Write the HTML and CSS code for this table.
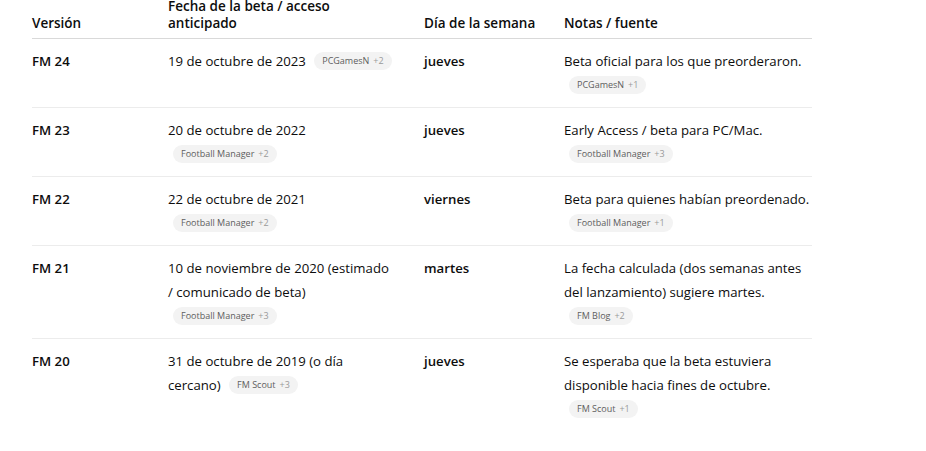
FILE: index.html
```html
<!DOCTYPE html>
<html lang="es">
<head>
<meta charset="utf-8">
<title>Fechas de beta de Football Manager</title>
<link rel="stylesheet" href="styles.css">
</head>
<body>
<div class="wrap">
<table class="table">
  <colgroup>
    <col class="c-ver"><col class="c-date"><col class="c-day"><col class="c-notes">
  </colgroup>
  <thead>
    <tr>
      <th>Versión</th>
      <th class="h-date">Fecha de la beta / acceso anticipado</th>
      <th>Día de la semana</th>
      <th>Notas / fuente</th>
    </tr>
  </thead>
  <tbody>
    <tr>
      <td class="ver">FM 24</td>
      <td class="cell date"><span class="txt">19 de octubre de 2023</span> <span class="pill">PCGamesN<span class="more">+2</span></span></td>
      <td class="day">jueves</td>
      <td class="cell"><span class="txt">Beta oficial para los que preorderaron.</span> <span class="pill">PCGamesN<span class="more">+1</span></span></td>
    </tr>
    <tr>
      <td class="ver">FM 23</td>
      <td class="cell date"><span class="txt">20 de octubre de 2022</span> <span class="pill">Football Manager<span class="more">+2</span></span></td>
      <td class="day">jueves</td>
      <td class="cell"><span class="txt">Early Access / beta para PC/Mac.</span> <span class="pill">Football Manager<span class="more">+3</span></span></td>
    </tr>
    <tr>
      <td class="ver">FM 22</td>
      <td class="cell date"><span class="txt">22 de octubre de 2021</span> <span class="pill">Football Manager<span class="more">+2</span></span></td>
      <td class="day">viernes</td>
      <td class="cell"><span class="txt">Beta para quienes habían preordenado.</span> <span class="pill">Football Manager<span class="more">+1</span></span></td>
    </tr>
    <tr>
      <td class="ver">FM 21</td>
      <td class="cell date"><span class="txt">10 de noviembre de 2020 (estimado / comunicado de beta)</span> <span class="pill">Football Manager<span class="more">+3</span></span></td>
      <td class="day">martes</td>
      <td class="cell"><span class="txt">La fecha calculada (dos semanas antes del lanzamiento) sugiere martes.</span> <span class="pill">FM Blog<span class="more">+2</span></span></td>
    </tr>
    <tr class="last">
      <td class="ver">FM 20</td>
      <td class="cell date"><span class="txt">31 de octubre de 2019 (o día cercano)</span> <span class="pill">FM Scout<span class="more">+3</span></span></td>
      <td class="day">jueves</td>
      <td class="cell"><span class="txt">Se esperaba que la beta estuviera disponible hacia fines de octubre.</span> <span class="pill">FM Scout<span class="more">+1</span></span></td>
    </tr>
  </tbody>
</table>
</div>
</body>
</html>
```
FILE: styles.css
```css
html, body {
  margin: 0;
  padding: 0;
  background: #ffffff;
}
body {
  font-family: "Open Sans", "Noto Sans", sans-serif;
  color: #0d0d0d;
  font-size: 13.2px;
}
.wrap {
  padding-left: 32px;
  margin-top: -2px;
}
.table {
  width: 780px;
  border-collapse: collapse;
  table-layout: fixed;
}
.c-ver { width: 136px; }
.c-date { width: 256px; }
.c-day { width: 140px; }
.c-notes { width: 248px; }
th {
  text-align: left;
  vertical-align: bottom;
  font-weight: 600;
  font-size: 13.5px;
  line-height: 17px;
  padding: 0 16px 6px 0;
  border-bottom: 1px solid #d9d9d9;
}
th.h-date { padding-right: 48px; }
th:last-child { padding-right: 0; }
td {
  vertical-align: top;
  line-height: 24px;
  padding: 10px 16px 13px 0;
  border-bottom: 1px solid #ececec;
}
td.cell { line-height: 16px; }
td.date { padding-right: 30px; }
td:last-child { padding-right: 0; }
tr.last td { border-bottom: none; }
.txt { line-height: 24px; }
.ver, .day { font-weight: 600; }
.pill {
  display: inline-block;
  vertical-align: top;
  margin: 3px 0 0 5px;
  height: 18px;
  line-height: 18px;
  padding: 0 8px;
  border-radius: 9px;
  background: #f3f3f3;
  color: #5d5d5d;
  font-size: 9px;
  font-weight: 400;
  white-space: nowrap;
}
.more {
  margin-left: 4px;
  color: #9a9a9a;
}
```
